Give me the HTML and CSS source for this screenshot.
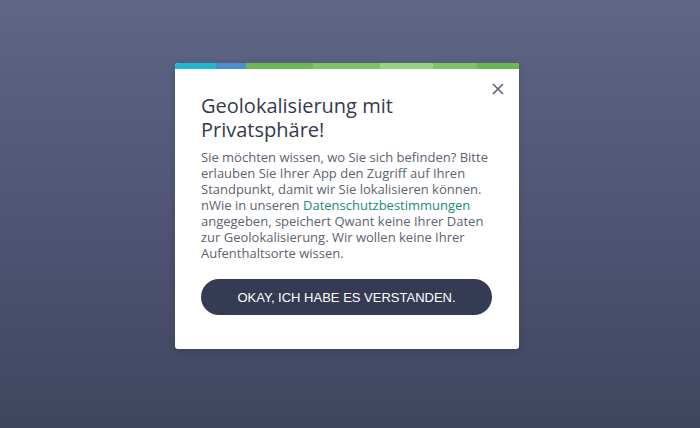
FILE: index.html
```html
<!DOCTYPE html>
<html lang="de">
<head>
    <meta charset="UTF-8">
    <meta name="viewport" content="width=device-width, initial-scale=1.0">
    <title>Geolokalisierung</title>
    <link rel="stylesheet" href="styles.css">
</head>
<body>
    <div class="modal">
        <div class="modal-bar">
            <span class="seg seg-cyan"></span>
            <span class="seg seg-blue"></span>
            <span class="seg seg-green"></span>
            <span class="seg seg-green-mid"></span>
            <span class="seg seg-green-light"></span>
            <span class="seg seg-green-mid2"></span>
            <span class="seg seg-green-dark"></span>
        </div>
        <button class="modal-close" type="button" aria-label="Schließen">
            <svg width="12" height="12" viewBox="0 0 12 12">
                <path d="M1 1 L11 11 M11 1 L1 11" stroke="#5a6275" stroke-width="1.6" fill="none"/>
            </svg>
        </button>
        <div class="modal-body">
            <h2 class="modal-title">Geolokalisierung mit Privatsphäre!</h2>
            <p class="modal-text">Sie möchten wissen, wo Sie sich befinden? Bitte erlauben Sie Ihrer App den Zugriff auf Ihren Standpunkt, damit wir Sie lokalisieren können. nWie in unseren <a href="#">Datenschutzbestimmungen</a> angegeben, speichert Qwant keine Ihrer Daten zur Geolokalisierung. Wir wollen keine Ihrer Aufenthaltsorte wissen.</p>
            <button class="modal-ok" type="button">OKAY, ICH HABE ES VERSTANDEN.</button>
        </div>
    </div>
</body>
</html>
```

FILE: styles.css
```css
html, body {
    margin: 0;
    padding: 0;
}
body {
    min-height: 428px;
    box-sizing: border-box;
    background: linear-gradient(180deg, #5f6686 0%, #4f5573 50%, #40455f 100%);
    font-family: "Open Sans", "Noto Sans", sans-serif;
    display: flex;
    justify-content: center;
    align-items: flex-start;
    padding: 63px 6px 0 0;
}
.modal {
    position: relative;
    width: 344px;
    background: #fff;
    border-radius: 3px;
    overflow: hidden;
    box-shadow: 0 2px 6px rgba(0, 0, 0, 0.15);
}
.modal-bar {
    display: flex;
    height: 6px;
}
.seg { display: block; height: 100%; }
.seg-cyan { width: 41px; background: #22b6cd; }
.seg-blue { width: 30px; background: #4b8fd1; }
.seg-green { width: 67px; background: #6cb852; }
.seg-green-mid { width: 67px; background: #7cc466; }
.seg-green-light { width: 53px; background: #97d47f; }
.seg-green-mid2 { width: 44px; background: #7dc368; }
.seg-green-dark { width: 42px; background: #6ab651; }
.modal-close {
    position: absolute;
    top: 20px;
    right: 15px;
    width: 12px;
    height: 12px;
    padding: 0;
    border: none;
    background: none;
    cursor: pointer;
    display: flex;
}
.modal-body {
    padding: 25px 27px 34px 26px;
}
.modal-title {
    margin: 0 0 7px;
    font-size: 20px;
    font-weight: 400;
    line-height: 24px;
    color: #343a4c;
    width: 220px;
}
.modal-text {
    margin: 0 0 18px;
    font-size: 13px;
    line-height: 16px;
    color: #5d6272;
}
.modal-text a {
    display: inline-block;
    line-height: 16px;
    color: #1b8a7a;
    text-decoration: none;
}
.modal-ok {
    display: block;
    width: 100%;
    height: 36px;
    border: none;
    border-radius: 18px;
    background: #353b53;
    color: #fff;
    font-family: "Liberation Sans", Arial, sans-serif;
    font-size: 13px;
    cursor: pointer;
}
```
